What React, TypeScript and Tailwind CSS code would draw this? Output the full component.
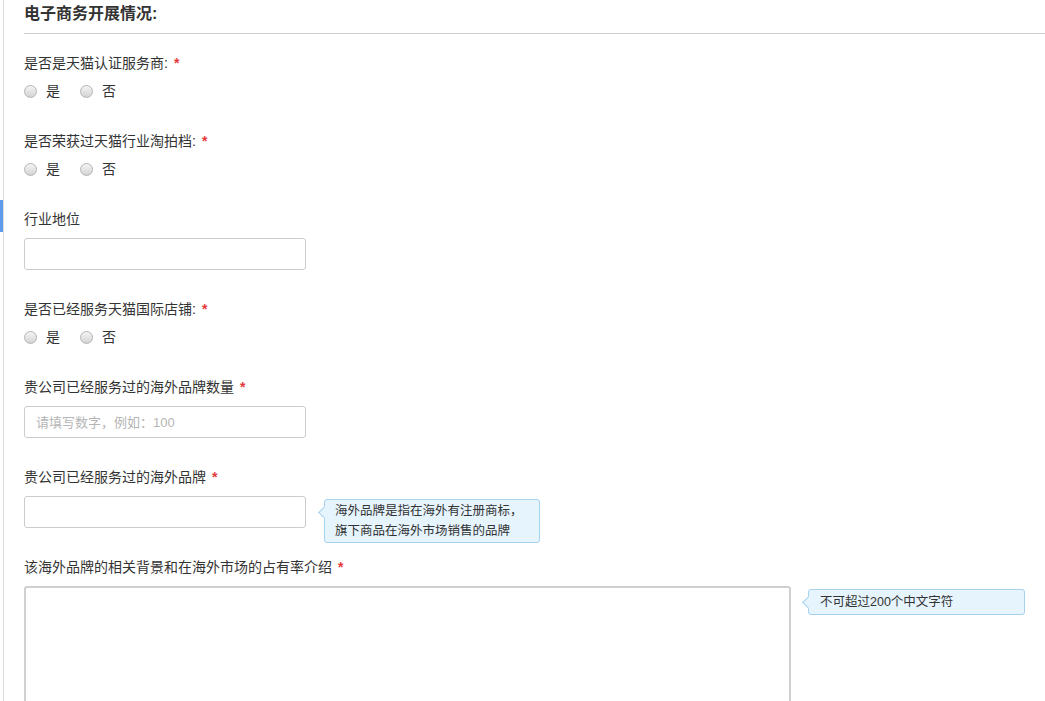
import React from 'react';

const FONT = { fontFamily: '"Liberation Sans", Arial, "Noto Sans CJK SC", sans-serif' };

function Star() {
  return <span className="ml-[6px] font-bold text-[#e4393c]">*</span>;
}

function Label({ children, mb = 'mb-[10px]' }: { children: React.ReactNode; mb?: string }) {
  return <div className={`${mb} h-[18px] text-[14px] leading-[18px]`}>{children}</div>;
}

function Radio({ label }: { label: string }) {
  return (
    <label className="flex items-center">
      <span className="h-[13px] w-[13px] rounded-full border border-[#b5b5b5] bg-gradient-to-b from-[#f4f4f4] to-[#d4d4d4]" />
      <span className="ml-[9px] text-[14px]">{label}</span>
    </label>
  );
}

function YesNo({ title }: { title: string }) {
  return (
    <div className="mb-[31px]">
      <Label mb="mb-[10px]">
        {title}:<Star />
      </Label>
      <div className="flex h-[19px] items-center gap-[20px]">
        <Radio label="是" />
        <Radio label="否" />
      </div>
    </div>
  );
}

function Tip({ lines, className }: { lines: string[]; className: string }) {
  return (
    <div className={`relative shrink-0 whitespace-nowrap rounded-[3px] border border-[#a6d2ee] bg-[#e6f4fd] text-[12.5px] text-[#333] ${className}`}>
      <span className="absolute left-[-5px] top-[8px] h-[9px] w-[9px] rotate-45 border-b border-l border-[#a6d2ee] bg-[#e6f4fd]" />
      {lines.map((l) => (
        <div key={l} className="relative">{l}</div>
      ))}
    </div>
  );
}

export default function App() {
  return (
    <div className="relative h-[701px] w-[1045px] overflow-hidden bg-white pl-[3px] text-[13px] text-[#333]" style={FONT}>
      <span className="absolute left-0 top-[200px] h-[32px] w-[3px] bg-[#5d9cec]" />
      <div className="h-full border-l border-[#dcdcdc] pl-[20px]">
        <div className="border-b border-[#cfcfcf] pb-[9px] pt-[4px] text-[16px] font-bold leading-[20px] text-[#333]">
          电子商务开展情况:
        </div>

        <div className="pt-[20px]">
          <YesNo title="是否是天猫认证服务商" />
          <YesNo title="是否荣获过天猫行业淘拍档" />

          <div className="mb-[30px]">
            <Label>行业地位</Label>
            <input className="block h-[32px] w-[282px] rounded-[3px] border border-[#ccc] px-[11px] outline-none" />
          </div>

          <YesNo title="是否已经服务天猫国际店铺" />

          <div className="mb-[30px]">
            <Label>
              贵公司已经服务过的海外品牌数量<Star />
            </Label>
            <input
              placeholder="请填写数字，例如：100"
              className="block h-[32px] w-[282px] rounded-[3px] border border-[#ccc] px-[11px] text-[13px] outline-none placeholder:text-[#b5b5b5]"
            />
          </div>

          <div className="mb-[30px]">
            <Label>
              贵公司已经服务过的海外品牌<Star />
            </Label>
            <div className="flex h-[32px] items-start">
              <input className="block h-[32px] w-[282px] rounded-[3px] border border-[#ccc] px-[11px] outline-none" />
              <Tip
                className="ml-[18px] mt-[3px] w-[216px] px-[10px] py-[1px] leading-[20px]"
                lines={['海外品牌是指在海外有注册商标，', '旗下商品在海外市场销售的品牌']}
              />
            </div>
          </div>

          <div>
            <Label>
              该海外品牌的相关背景和在海外市场的占有率介绍<Star />
            </Label>
            <div className="flex items-start">
              <textarea className="block h-[160px] w-[767px] resize-none rounded-[3px] border-2 border-[#d0d0d0] outline-none" />
              <Tip className="ml-[17px] mt-[3px] w-[217px] px-[11px] py-[2px] leading-[20px]" lines={['不可超过200个中文字符']} />
            </div>
          </div>
        </div>
      </div>
    </div>
  );
}
